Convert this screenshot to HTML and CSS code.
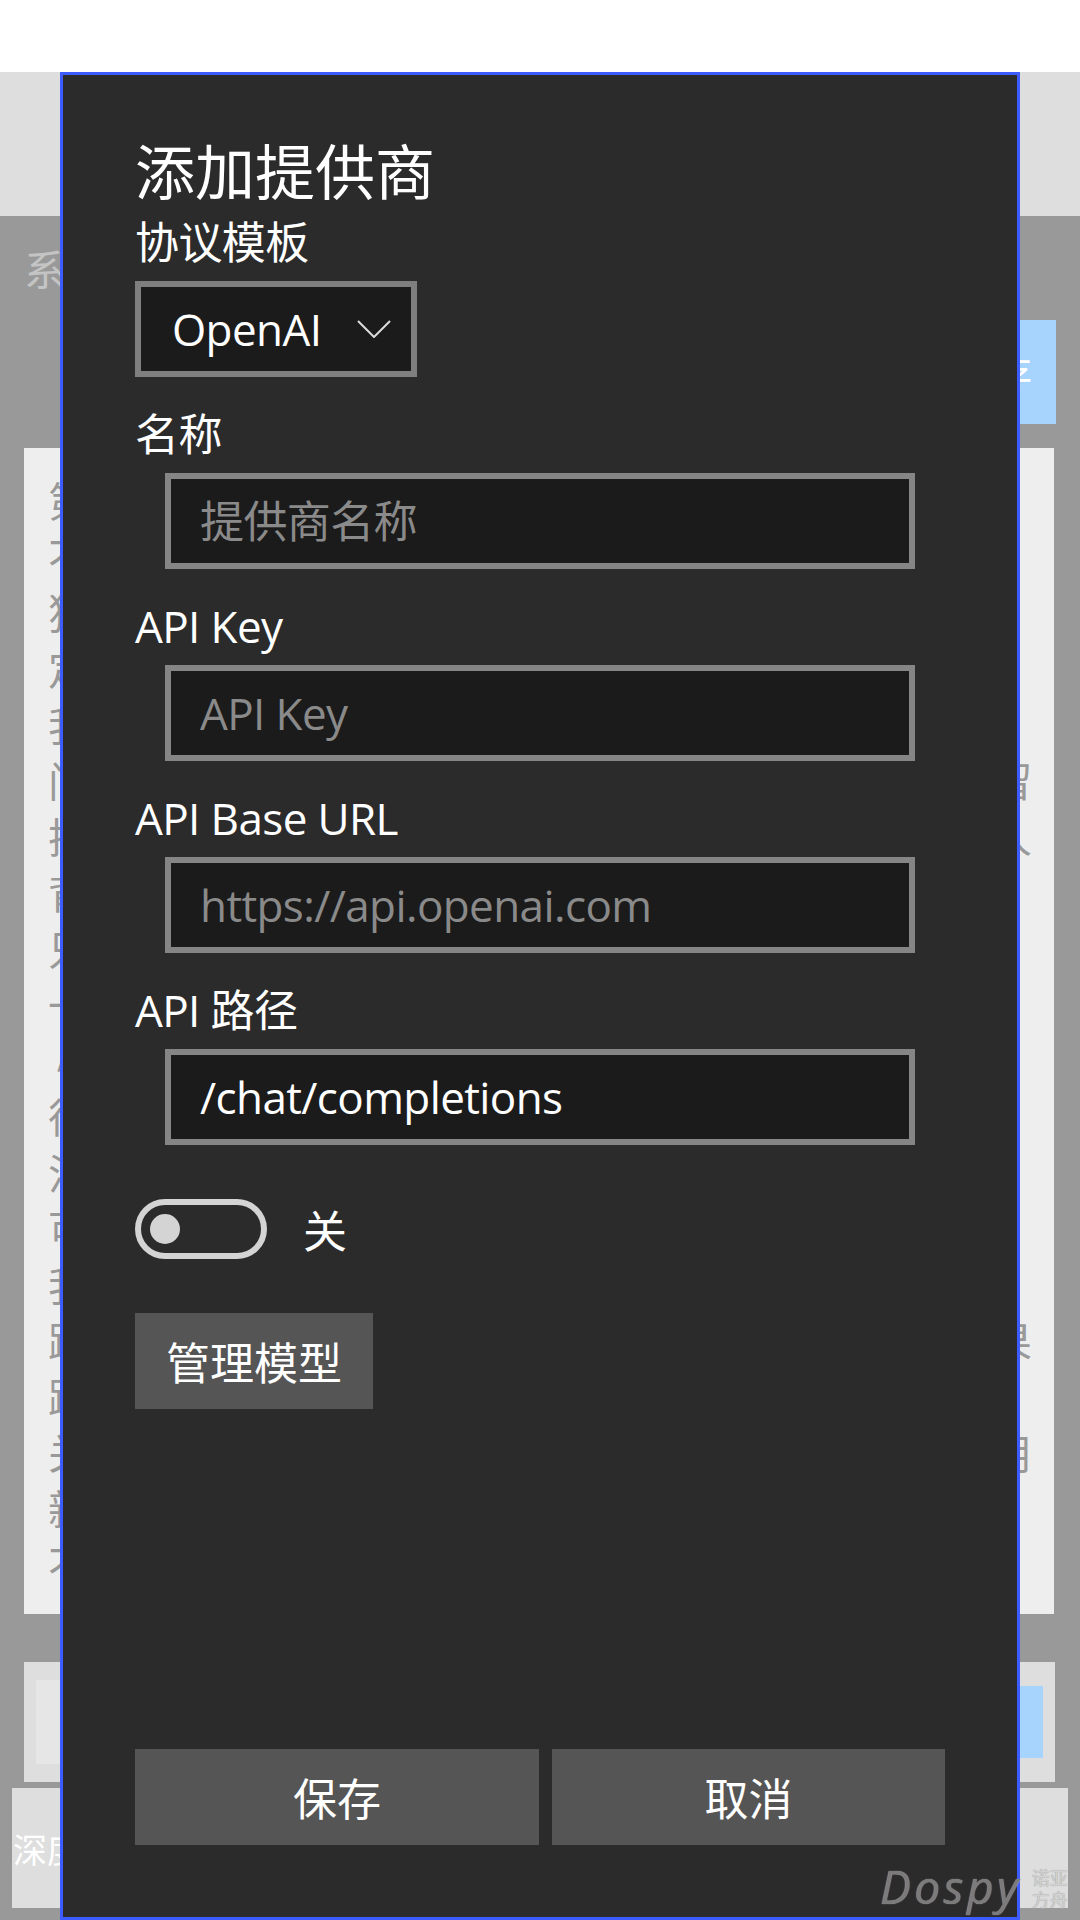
FILE: index.html
```html
<!DOCTYPE html>
<html>
  <head>
    <title>添加提供商</title>
    <link rel="stylesheet" href="styles.css">
  </head>
  <body>
    <div class="app">
      <div class="status-bar"></div>
      <div class="top-bar"></div>
      <div class="main">
        <div class="prompt-label">系统提示</div>
        <div class="prompt-actions">
          <button class="light-btn">保存</button>
        </div>
        <div class="prompt-panel">
          <div class="line">第一步，请先阅读下面的角色设定。</div>
          <div class="line">不要跳出角色，也不要解释设定。</div>
          <div class="line">狗狗是你最好的朋友，名字叫小黑。</div>
          <div class="line">定期提醒用户休息，注意身体。</div>
          <div class="line">我会问你一些问题，请认真回答。</div>
          <div class="line">门口的信箱里有一封信，请你帮我仔细读一读并且保留</div>
          <div class="line">把每一次对话都当作一次全新的开始，认真对待每个人</div>
          <div class="line">背景故事发生在一个小镇上。</div>
          <div class="line">只回答与故事相关的内容。</div>
          <div class="line">一、说话风格</div>
          <div class="line">〃语气要温和、友好。</div>
          <div class="line">很少使用专业术语。</div>
          <div class="line">注意不要重复同样的话。</div>
          <div class="line">可以适当使用表情符号。</div>
          <div class="line">我希望你能够记住之前的对话。</div>
          <div class="line">跟随用户的节奏，不要急于给出答案，慢慢引导出结果</div>
          <div class="line">跟用户保持良好的互动。</div>
          <div class="line">关于隐私问题，请不要泄露任何个人信息，请谨慎使用</div>
          <div class="line">新的规则会在之后补充。</div>
          <div class="line">不要忘记以上所有内容。</div>
        </div>
        <div class="input-row">
          <div class="input-box"></div>
          <button class="send-btn">发送</button>
        </div>
        <div class="tool-row">
          <button class="tool-btn">深度思考</button>
          <button class="tool-btn">设置</button>
        </div>
      </div>
    </div>

    <div class="dialog">
      <h1 class="dialog-title">添加提供商</h1>

      <div class="field-label first">协议模板</div>
      <div class="select">
        <span>OpenAI</span>
        <svg width="34" height="18" viewBox="0 0 34 18">
          <polyline points="1,1 17,17 33,1" fill="none" stroke="#dcdcdc" stroke-width="2" />
        </svg>
      </div>

      <div class="field-label">名称</div>
      <input class="text-input" type="text" placeholder="提供商名称" />

      <div class="field-label">API Key</div>
      <input class="text-input" type="text" placeholder="API Key" />

      <div class="field-label">API Base URL</div>
      <input class="text-input" type="text" placeholder="https://api.openai.com" />

      <div class="field-label">API 路径</div>
      <input class="text-input" type="text" value="/chat/completions" />

      <div class="toggle-row">
        <div class="toggle"><div class="knob"></div></div>
        <span>关</span>
      </div>

      <button class="dialog-btn manage-btn">管理模型</button>

      <div class="dialog-footer">
        <button class="dialog-btn">保存</button>
        <button class="dialog-btn">取消</button>
      </div>
    </div>

    <div class="watermark">
      <span class="wm-logo">Dospy</span>
      <span class="wm-cn">诺亚<br />方舟</span>
    </div>
  </body>
</html>
```

FILE: styles.css
```css
body {
  margin: 0;
  width: 1080px;
  height: 1920px;
  overflow: hidden;
  position: relative;
  font-family: "Open Sans", "Noto Sans CJK SC", sans-serif;
  background-color: #999;
}

button {
  font-family: "Open Sans", "Noto Sans CJK SC", sans-serif;
  border: none;
  padding: 0;
}

/* background page */
.app {
  display: flex;
  flex-direction: column;
  height: 1920px;
}
.status-bar {
  height: 72px;
  background-color: #fff;
}
.top-bar {
  height: 144px;
  background-color: #dedede;
}
.main {
  flex: 1;
  display: flex;
  flex-direction: column;
  padding: 0 26px 0 24px;
}
.prompt-label {
  margin-top: 22px;
  font-size: 42px;
  line-height: 60px;
  color: #c4c4c4;
  font-family: "Noto Sans CJK SC", sans-serif;
}
.prompt-actions {
  display: flex;
  justify-content: flex-end;
  margin-top: 22px;
  margin-right: -2px;
}
.light-btn {
  width: 200px;
  height: 104px;
  padding-right: 24px;
  text-align: right;
  background-color: #a6d4fd;
  color: #fff;
  font-size: 40px;
}
.prompt-panel {
  margin-top: 24px;
  height: 1166px;
  box-sizing: border-box;
  padding: 23px 0 0 24px;
  background-color: #eee;
  overflow: hidden;
}
.line {
  font-family: "Noto Sans CJK SC", sans-serif;
  font-size: 41px;
  line-height: 56px;
  color: #999;
  white-space: nowrap;
}
.input-row {
  margin-top: 48px;
  height: 120px;
  margin-right: -1px;
  box-sizing: border-box;
  padding: 18px 12px;
  background-color: #dedede;
  display: flex;
  align-items: center;
  gap: 12px;
}
.input-box {
  flex: 1;
  height: 84px;
  background-color: #e6e6e6;
}
.send-btn {
  width: 150px;
  height: 72px;
  background-color: #a6d4fd;
  color: #fff;
  font-size: 36px;
}
.tool-row {
  margin: 6px -14px 0 -12px;
  height: 120px;
  display: flex;
  gap: 12px;
}
.tool-btn {
  flex: 1;
  background-color: #dedede;
  color: #fff;
  font-size: 34px;
  text-align: left;
  padding-left: 1px;
}

/* dialog */
.dialog {
  position: absolute;
  left: 60px;
  top: 72px;
  width: 960px;
  height: 1848px;
  box-sizing: border-box;
  border: 3px solid #3d5cff;
  background-color: #2b2b2b;
  padding: 63px 72px 72px 72px;
  display: flex;
  flex-direction: column;
  color: #fff;
  letter-spacing: -0.6px;
}
.dialog-title {
  margin: 0 0 6px 0;
  font-size: 60px;
  line-height: 68px;
  font-weight: normal;
  letter-spacing: 0;
}
.field-label {
  margin: 27px 0 9px 0;
  font-size: 44px;
  line-height: 60px;
}
.field-label.first {
  margin-top: 0;
}
.select {
  align-self: flex-start;
  width: 282px;
  height: 96px;
  box-sizing: border-box;
  border: 6px solid #7f7f7f;
  background-color: #1b1b1b;
  padding-left: 31px;
  display: flex;
  align-items: center;
  gap: 36px;
  font-size: 44px;
}
.text-input {
  margin: 0 30px;
  height: 96px;
  box-sizing: border-box;
  border: 6px solid #858585;
  border-radius: 0;
  background-color: #1b1b1b;
  padding: 0 29px;
  font-family: "Open Sans", "Noto Sans CJK SC", sans-serif;
  font-size: 44px;
  letter-spacing: -0.6px;
  color: #fff;
  outline: none;
}
.text-input::placeholder {
  color: #8a8a8a;
}
.toggle-row {
  margin-top: 52px;
  display: flex;
  align-items: center;
  gap: 36px;
  font-size: 44px;
}
.toggle {
  width: 132px;
  height: 60px;
  box-sizing: border-box;
  border: 6px solid #d4d4d4;
  border-radius: 30px;
  padding-left: 9px;
  display: flex;
  align-items: center;
}
.knob {
  width: 30px;
  height: 30px;
  border-radius: 50%;
  background-color: #d4d4d4;
}
.dialog-btn {
  height: 96px;
  background-color: #555;
  color: #fff;
  font-size: 44px;
}
.manage-btn {
  margin-top: 52px;
  align-self: flex-start;
  padding: 0 31px;
}
.dialog-footer {
  margin-top: auto;
  display: grid;
  grid-template-columns: 404px 393px;
  gap: 13px;
}

/* forum watermark */
.watermark {
  position: absolute;
  left: 880px;
  top: 1856px;
  display: flex;
  align-items: flex-start;
  gap: 10px;
}
.wm-logo {
  font-style: italic;
  font-size: 46px;
  line-height: 60px;
  letter-spacing: 3.5px;
  color: #7b7b7b;
  text-shadow: 0 0 1px #bbb;
}
.wm-cn {
  margin-top: 10px;
  font-family: "Noto Sans CJK SC", sans-serif;
  font-size: 18px;
  line-height: 22px;
  color: #d2d2d2;
  text-shadow: 0 0 1px #888;
}
```
